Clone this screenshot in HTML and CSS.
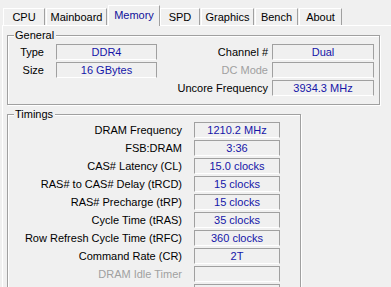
FILE: index.html
```html
<!DOCTYPE html>
<html>
<head>
<meta charset="utf-8">
<link rel="stylesheet" href="styles.css">
</head>
<body>
<div class="tabs">
  <div class="tab t-cpu">CPU</div>
  <div class="tab t-main">Mainboard</div>
  <div class="tab t-mem active">Memory</div>
  <div class="tab t-spd">SPD</div>
  <div class="tab t-gfx">Graphics</div>
  <div class="tab t-bench">Bench</div>
  <div class="tab t-about">About</div>
</div>
<div class="page">
  <fieldset class="group general">
    <legend>General</legend>
    <div class="gen-body">
      <div class="col col-left">
        <div class="row"><span class="lbl lbl-l">Type</span><span class="box box-l">DDR4</span></div>
        <div class="row"><span class="lbl lbl-l">Size</span><span class="box box-l">16 GBytes</span></div>
      </div>
      <div class="col col-right">
        <div class="row"><span class="lbl lbl-r">Channel #</span><span class="box box-r">Dual</span></div>
        <div class="row"><span class="lbl lbl-r dis">DC Mode</span><span class="box box-r"></span></div>
        <div class="row"><span class="lbl lbl-r">Uncore Frequency</span><span class="box box-r">3934.3 MHz</span></div>
      </div>
    </div>
  </fieldset>
  <fieldset class="group timings">
    <legend>Timings</legend>
    <div class="col">
      <div class="row"><span class="lbl lbl-t">DRAM Frequency</span><span class="box box-t">1210.2 MHz</span></div>
      <div class="row"><span class="lbl lbl-t">FSB:DRAM</span><span class="box box-t">3:36</span></div>
      <div class="row"><span class="lbl lbl-t">CAS# Latency (CL)</span><span class="box box-t">15.0 clocks</span></div>
      <div class="row"><span class="lbl lbl-t">RAS# to CAS# Delay (tRCD)</span><span class="box box-t">15 clocks</span></div>
      <div class="row"><span class="lbl lbl-t">RAS# Precharge (tRP)</span><span class="box box-t">15 clocks</span></div>
      <div class="row"><span class="lbl lbl-t">Cycle Time (tRAS)</span><span class="box box-t">35 clocks</span></div>
      <div class="row"><span class="lbl lbl-t">Row Refresh Cycle Time (tRFC)</span><span class="box box-t">360 clocks</span></div>
      <div class="row"><span class="lbl lbl-t">Command Rate (CR)</span><span class="box box-t">2T</span></div>
      <div class="row"><span class="lbl lbl-t dis">DRAM Idle Timer</span><span class="box box-t"></span></div>
      <div class="row"><span class="lbl lbl-t dis">Total CAS# (tRDRAM)</span><span class="box box-t"></span></div>
    </div>
  </fieldset>
</div>
</body>
</html>
```
FILE: styles.css
```css
html, body {
  margin: 0;
  padding: 0;
}
body {
  width: 391px;
  height: 287px;
  overflow: hidden;
  background: #f0f0f0;
  font-family: "Liberation Sans", Arial, sans-serif;
  font-size: 11px;
  line-height: 13px;
  color: #000;
}
.tabs {
  display: flex;
  align-items: flex-end;
  height: 25px;
  padding-left: 3px;
  position: relative;
  z-index: 2;
}
.tab {
  box-sizing: border-box;
  height: 17px;
  border-top: 1px solid #fff;
  border-left: 1px solid #fff;
  border-right: 1px solid #a0a0a0;
  background: #f0f0f0;
  display: flex;
  justify-content: center;
  align-items: center;
  margin-right: 1px;
  padding-top: 1px;
}
.tab.active {
  height: 21px;
  margin-bottom: -1px;
  color: #10109a;
  padding-top: 0;
  padding-bottom: 1px;
}
.t-cpu { width: 42px; }
.t-main { width: 61px; }
.t-mem { width: 52px; margin-right: 0; }
.t-spd { width: 40px; }
.t-gfx { width: 53px; }
.t-bench { width: 43px; }
.t-about { width: 43px; }

.page {
  margin-left: 2px;
  border-top: 1px solid #fff;
  border-left: 1px solid #fff;
  padding-left: 4px;
  padding-top: 3px;
  height: 300px;
}
.group {
  margin: 0;
  padding: 0;
  box-sizing: border-box;
  border: 1px solid #a0a0a0;
  box-shadow: inset 1px 1px 0 #fff, 1px 1px 0 #fff;
  min-width: 0;
}
.group legend {
  margin-left: 6px;
  padding: 0 2px 0 1px;
  background: #f0f0f0;
  line-height: 13px;
}
.general {
  width: 373px;
  padding: 2px 5px 8px 0;
}
.timings {
  width: 294px;
  margin-top: 3px;
  padding: 1px 0 0 0;
}
.gen-body {
  display: flex;
  justify-content: space-between;
}
.col {
  display: flex;
  flex-direction: column;
  gap: 2px;
}
.row {
  display: flex;
  align-items: center;
  height: 16px;
}
.lbl {
  text-align: right;
  white-space: nowrap;
}
.lbl-l { width: 36px; margin-right: 12px; }
.lbl-r { width: 95px; margin-right: 4px; }
.lbl-t { width: 174px; margin-right: 12px; }
.dis { color: #a0a0a0; }
.box {
  box-sizing: border-box;
  height: 16px;
  border-top: 1px solid #a0a0a0;
  border-left: 1px solid #a0a0a0;
  border-right: 1px solid #a0a0a0;
  border-bottom: 1px solid #fff;
  color: #1515a8;
  text-align: center;
  line-height: 14px;
}
.box-l { width: 101px; }
.box-r { width: 102px; }
.box-t { width: 86px; }
```
